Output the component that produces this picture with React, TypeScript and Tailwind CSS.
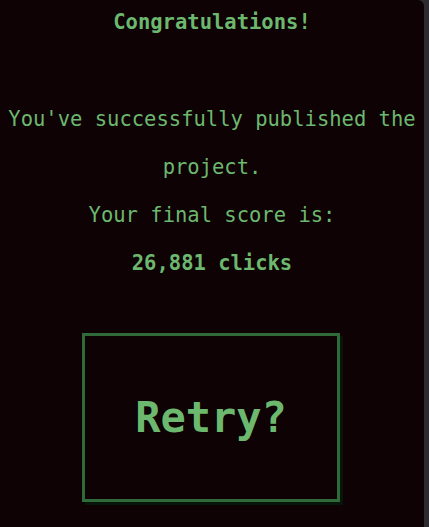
const mono = { fontFamily: '"DejaVu Sans Mono", "Liberation Mono", monospace' };

export default function App() {
  return (
    <div className="flex h-[527px] w-[429px] bg-[#2b2b30]">
      <div
        className="flex w-[424px] flex-col items-center rounded-tr-[6px] bg-[#0e0204] text-center text-[#6cb86f]"
        style={mono}
      >
        <h1 className="text-[20.5px] font-bold leading-[44px]">Congratulations!</h1>
        <div className="mt-[51px] text-[20.5px] leading-[48px]">
          <p>You've successfully published the project.</p>
          <p>Your final score is:</p>
          <p className="font-bold">26,881 clicks</p>
        </div>
        <button className="mt-[46px] -ml-[2px] flex h-[169px] w-[258px] items-center justify-center border-[3px] border-[#2f6a38] text-[42px] font-bold text-[#6cb86f] shadow-[3px_3px_0_#06170a]">
          Retry?
        </button>
      </div>
    </div>
  );
}
